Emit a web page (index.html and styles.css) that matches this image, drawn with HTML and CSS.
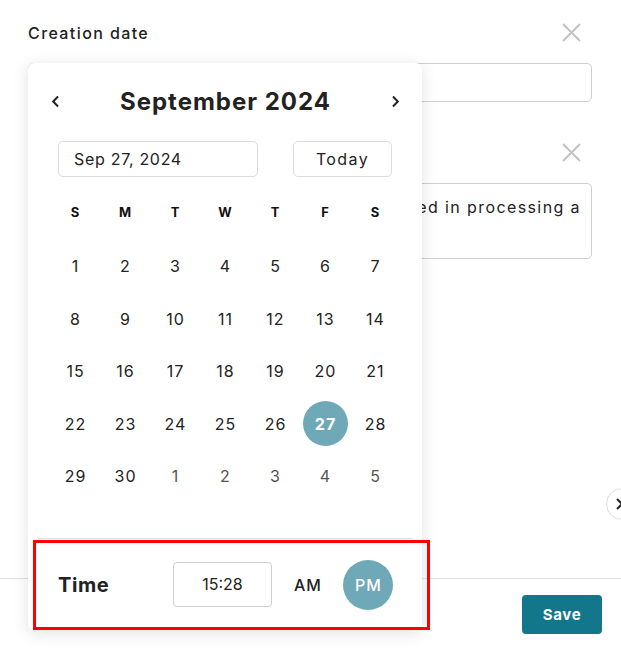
FILE: index.html
```html
<!DOCTYPE html>
<html lang="en">
<head>
<meta charset="utf-8">
<title>Creation date</title>
<link rel="stylesheet" href="styles.css">
</head>
<body>
<div class="page">
  <main class="form">
    <div class="field">
      <div class="field-head">
        <span class="label">Creation date</span>
        <button class="close" aria-label="Clear">
          <svg width="19" height="19" viewBox="0 0 19 19"><path d="M1 1L18 18M18 1L1 18" stroke="#c2c2c2" stroke-width="2" fill="none"/></svg>
        </button>
      </div>
      <div class="input"></div>
    </div>
    <div class="field field-2">
      <div class="field-head end">
        <button class="close" aria-label="Clear">
          <svg width="19" height="19" viewBox="0 0 19 19"><path d="M1 1L18 18M18 1L1 18" stroke="#c2c2c2" stroke-width="2" fill="none"/></svg>
        </button>
      </div>
      <div class="textarea"><span class="textline">ed in processing a</span></div>
    </div>
  </main>
  <footer class="footer">
    <button class="save">Save</button>
  </footer>

  <div class="popup">
    <div class="cal">
      <div class="cal-head">
        <button class="nav" aria-label="Previous month">
          <svg width="9" height="13" viewBox="0 0 9 13"><path d="M7 1.5L2.2 6.5L7 11.5" stroke="#222" stroke-width="2" fill="none"/></svg>
        </button>
        <span class="month">September 2024</span>
        <button class="nav" aria-label="Next month">
          <svg width="9" height="13" viewBox="0 0 9 13"><path d="M2 1.5L6.8 6.5L2 11.5" stroke="#222" stroke-width="2" fill="none"/></svg>
        </button>
      </div>
      <div class="cal-inputs">
        <div class="date-input">Sep 27, 2024</div>
        <button class="today">Today</button>
      </div>
      <div class="weekdays">
        <span>S</span><span>M</span><span>T</span><span>W</span><span>T</span><span>F</span><span>S</span>
      </div>
      <div class="days">
        <span>1</span><span>2</span><span>3</span><span>4</span><span>5</span><span>6</span><span>7</span>
        <span>8</span><span>9</span><span>10</span><span>11</span><span>12</span><span>13</span><span>14</span>
        <span>15</span><span>16</span><span>17</span><span>18</span><span>19</span><span>20</span><span>21</span>
        <span>22</span><span>23</span><span>24</span><span>25</span><span>26</span><span class="sel">27</span><span>28</span>
        <span>29</span><span>30</span><span class="other">1</span><span class="other">2</span><span class="other">3</span><span class="other">4</span><span class="other">5</span>
      </div>
    </div>
    <div class="time">
      <span class="time-label">Time</span>
      <div class="time-input">15:28</div>
      <span class="ampm">AM</span>
      <span class="ampm pm">PM</span>
    </div>
  </div>

  <div class="annot"></div>

  <button class="edge-btn" aria-label="Close">
    <svg width="14" height="14" viewBox="0 0 14 14"><path d="M2 2L12 12M12 2L2 12" stroke="#222" stroke-width="2" fill="none"/></svg>
  </button>
</div>
</body>
</html>
```
FILE: styles.css
```css
* { box-sizing: border-box; }
html, body {
  margin: 0;
  padding: 0;
  background: #fff;
  overflow: hidden;
}
body {
  font-family: "Inter", "Noto Sans", sans-serif;
  color: #222;
}
button {
  font-family: inherit;
  border: none;
  background: none;
  padding: 0;
  margin: 0;
  cursor: pointer;
}
.page {
  position: relative;
  width: 621px;
  height: 649px;
  overflow: hidden;
}
.form {
  height: 578px;
  padding: 23px 29px 0 28px;
}
.field-head {
  display: flex;
  justify-content: space-between;
  align-items: center;
  height: 19px;
  padding-right: 11px;
}
.field-head.end {
  justify-content: flex-end;
}
.label {
  font-size: 16px;
  font-weight: 500;
  letter-spacing: 1.4px;
  color: #222;
}
.close {
  display: flex;
  width: 19px;
  height: 19px;
}
.input {
  margin-top: 21px;
  height: 39px;
  border: 1px solid #cfcfcf;
  border-radius: 5px;
}
.field-2 {
  margin-top: 41px;
}
.textarea {
  margin-top: 21px;
  height: 76px;
  border: 1px solid #cfcfcf;
  border-radius: 5px;
  padding: 11px 10px 0 16px;
  display: flex;
  justify-content: flex-end;
  overflow: hidden;
}
.textline {
  white-space: nowrap;
  font-size: 16px;
  line-height: 24px;
  letter-spacing: 1.4px;
  color: #222;
}
.footer {
  border-top: 1px solid #e2e2e2;
  display: flex;
  justify-content: flex-end;
  padding: 16px 19px 0 0;
}
.save {
  width: 80px;
  height: 39px;
  border-radius: 4px;
  background: #13778c;
  color: #fff;
  font-size: 15px;
  font-weight: 700;
  letter-spacing: 0.6px;
}

/* calendar popup */
.popup {
  position: absolute;
  left: 28px;
  top: 63px;
  width: 394px;
  height: 567px;
  background: #fff;
  border-radius: 6px;
  box-shadow: 0 3px 16px rgba(0, 0, 0, 0.12);
  display: flex;
  flex-direction: column;
}
.cal {
  padding: 0 22px;
}
.cal-head {
  display: flex;
  justify-content: space-between;
  align-items: center;
  height: 40px;
  margin-top: 18px;
  padding: 0 0 0 1px;
}
.nav {
  display: flex;
  width: 9px;
  height: 13px;
}
.month {
  font-size: 24px;
  font-weight: 700;
  letter-spacing: 1px;
  color: #222;
}
.cal-inputs {
  display: flex;
  justify-content: space-between;
  margin: 20px 8px 0 8px;
}
.date-input {
  width: 200px;
  height: 36px;
  border: 1px solid #dcdcdc;
  border-radius: 5px;
  padding-left: 15px;
  font-size: 16px;
  line-height: 34px;
  letter-spacing: 0.7px;
  color: #222;
}
.today {
  width: 99px;
  height: 36px;
  border: 1px solid #dcdcdc;
  border-radius: 5px;
  font-size: 16px;
  letter-spacing: 1.4px;
  color: #222;
}
.weekdays {
  display: grid;
  grid-template-columns: repeat(7, 50px);
  margin-top: 25px;
  height: 20px;
  align-items: center;
}
.weekdays span {
  text-align: center;
  font-size: 13px;
  font-weight: 700;
  color: #111;
}
.days {
  display: grid;
  grid-template-columns: repeat(7, 50px);
  grid-auto-rows: 45px;
  row-gap: 7.5px;
  margin-top: 21.5px;
}
.days span {
  display: flex;
  align-items: center;
  justify-content: center;
  font-size: 16px;
  letter-spacing: 1px;
  text-indent: 1px;
  color: #222;
}
.days .other {
  color: #555;
}
.days .sel {
  width: 45px;
  height: 45px;
  justify-self: center;
  border-radius: 50%;
  background: #6fa9b8;
  color: #fff;
  font-weight: 700;
}
.time {
  margin: auto 9px 0 10px;
  border-top: 1px solid #dddddd;
  height: 92px;
  display: flex;
  align-items: center;
  padding: 0 0 0 20px;
}
.time-label {
  width: 115px;
  font-size: 20px;
  font-weight: 700;
  letter-spacing: 0.6px;
  color: #222;
}
.time-input {
  width: 99px;
  height: 45px;
  border: 1px solid #cfcfcf;
  border-radius: 4px;
  text-align: center;
  line-height: 43px;
  font-size: 16px;
  color: #222;
}
.ampm {
  margin-left: 22px;
  font-size: 16px;
  font-weight: 500;
  letter-spacing: 1px;
  color: #222;
}
.ampm.pm {
  margin-left: 21px;
  width: 50px;
  height: 50px;
  border-radius: 50%;
  background: #6fa9b8;
  color: #fff;
  display: flex;
  align-items: center;
  justify-content: center;
  text-indent: 1px;
}

/* annotation overlay */
.annot {
  position: absolute;
  left: 33px;
  top: 540px;
  width: 397px;
  height: 90px;
  border: 3px solid #f00;
  pointer-events: none;
}

/* edge floating button, partly off-screen */
.edge-btn {
  position: absolute;
  left: 606px;
  top: 488px;
  width: 32px;
  height: 32px;
  border-radius: 50%;
  border: 1px solid #dedede;
  background: #fff;
  display: flex;
  align-items: center;
  justify-content: center;
}
```
